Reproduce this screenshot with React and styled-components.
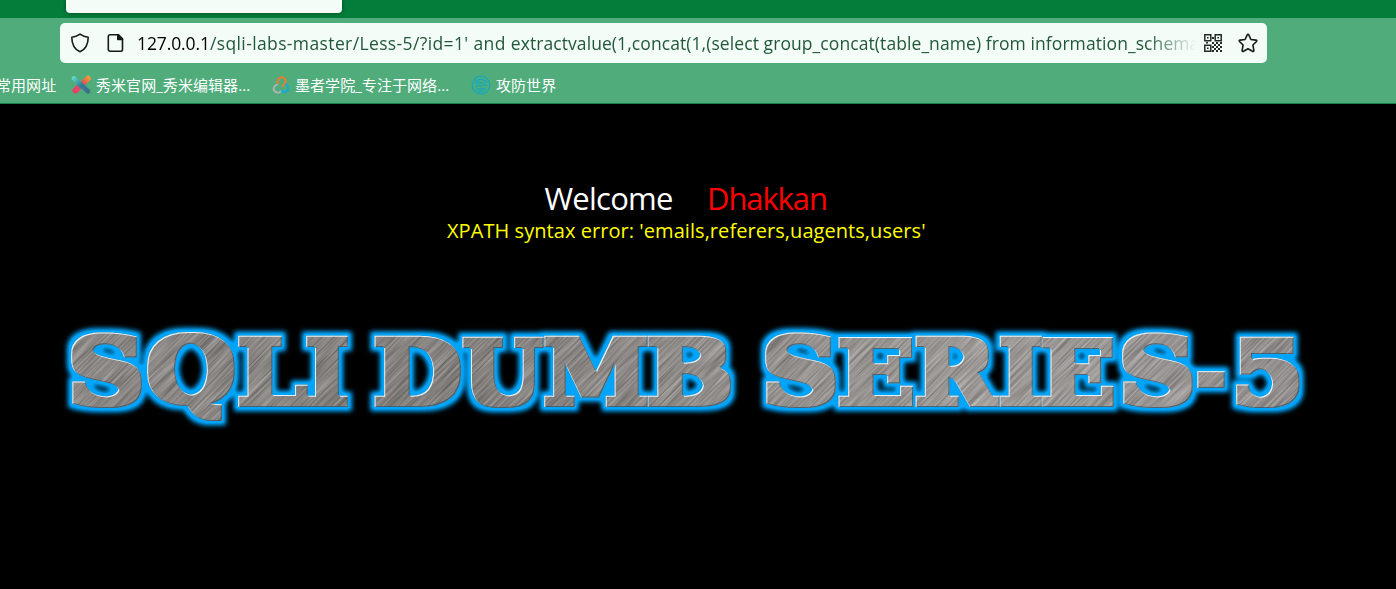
import React, { useMemo } from "react";
import styled, { createGlobalStyle } from "styled-components";

const Global = createGlobalStyle`
  * { box-sizing: border-box; }
  body { margin: 0; background: #000; overflow: hidden; }
`;

const Window = styled.div`
  height: 589px;
  display: flex;
  flex-direction: column;
  background: #000;
  overflow: hidden;
  font-family: "Open Sans", "Noto Sans CJK SC", sans-serif;
`;

const TabStrip = styled.div`
  height: 18px;
  padding-left: 66px;
  background: #047d3b;
`;

const ActiveTab = styled.div`
  width: 276px;
  height: 13px;
  background: #f3fcf7;
  border-radius: 0 0 4px 4px;
  box-shadow: 0 0 4px rgba(0, 0, 0, 0.5);
`;

const Toolbar = styled.div`
  height: 50px;
  padding: 5px 0 5px 60px;
  background: #50ad7b;
`;

const AddressBar = styled.div`
  width: 1207px;
  height: 40px;
  padding: 0 8px 0 10px;
  display: flex;
  align-items: center;
  background: #f3fcf7;
  border-radius: 5px;
`;

const Icon = styled.svg`
  flex: none;
  display: block;
  width: ${(p) => p.$size || 20}px;
  height: ${(p) => p.$size || 20}px;
  margin-right: ${(p) => p.$gap || 0}px;
`;

const Url = styled.div`
  width: 1059px;
  margin-right: 8px;
  overflow: hidden;
  white-space: pre;
  font-size: 17.5px;
  line-height: 34px;
  color: #22573a;
  mask-image: linear-gradient(to right, #000 calc(100% - 50px), transparent);
`;

const UrlPart = styled.span`
  letter-spacing: ${(p) => p.$track}px;
  color: ${(p) => (p.$host ? "#000" : "inherit")};
`;

const Bookmarks = styled.nav`
  height: 36px;
  display: flex;
  align-items: flex-start;
  padding-top: 5px;
  background: #50ad7b;
  border-bottom: 1px solid #1a8048;
`;

const Bookmark = styled.div`
  flex: none;
  display: flex;
  align-items: center;
  height: 24px;
  width: ${(p) => p.$width}px;
  margin-left: ${(p) => p.$offset || 0}px;
  font-size: 15px;
  line-height: 24px;
  letter-spacing: 0.06px;
  color: #fff;
  white-space: nowrap;
`;

const Page = styled.main`
  flex: 1;
  display: flex;
  flex-direction: column;
`;

const Greeting = styled.h1`
  display: flex;
  margin: 72px 0 0 544.5px;
  height: 44px;
  font-size: 31px;
  line-height: 44px;
  font-weight: 400;
  color: #fff;
`;

const GreetingWord = styled.span`
  width: 162.5px;
  letter-spacing: -0.75px;
`;

const Name = styled.span`
  letter-spacing: -1.1px;
  color: #f00;
`;

const ErrorLine = styled.p`
  margin: 0 0 0 447px;
  height: 24px;
  font-size: 20px;
  line-height: 22px;
  letter-spacing: 0.06px;
  white-space: nowrap;
  color: #ff0;
`;

const Banner = styled.svg`
  display: block;
  width: 1396px;
  height: 140px;
  margin-top: 66px;
`;

/* Each letter with the box its ink fills: left, right, top, bottom. */
const LETTERS = [
  ["S", 71, 142, 23, 98],
  ["Q", 147, 235, 22, 111],
  ["L", 238, 308, 26, 97],
  ["I", 306, 348, 26, 97],
  ["D", 374.5, 461.5, 26, 97],
  ["U", 462, 544, 26, 98],
  ["M", 544, 648, 26, 97],
  ["B", 647.5, 731.5, 26, 97],
  ["S", 765, 836, 23, 98],
  ["E", 838.5, 913.5, 26, 97],
  ["R", 915.5, 1000, 26, 97],
  ["I", 999.5, 1042, 26, 97],
  ["E", 1041, 1114, 26, 97],
  ["S", 1122, 1193, 23, 98],
  ["-", 1197, 1225, 61, 78],
  ["5", 1236, 1300, 26, 98],
];

const THICKEN = 3;

function fitLetters() {
  const ctx = document.createElement("canvas").getContext("2d");
  ctx.font = 'bold 200px "DejaVu Serif"';
  return LETTERS.map(([char, left, right, top, bottom]) => {
    const m = ctx.measureText(char);
    const sx = (right - left - 2 * THICKEN) / (m.actualBoundingBoxRight + m.actualBoundingBoxLeft);
    const sy = (bottom - top - 2 * THICKEN) / (m.actualBoundingBoxAscent + m.actualBoundingBoxDescent);
    const tx = left + THICKEN + m.actualBoundingBoxLeft * sx;
    const ty = top + THICKEN + m.actualBoundingBoxAscent * sy;
    return { char, transform: `matrix(${sx} 0 0 ${sy} ${tx} ${ty})` };
  });
}

const area = { filterUnits: "userSpaceOnUse", x: 0, y: 0, width: 1396, height: 140, colorInterpolationFilters: "sRGB" };

function Title() {
  const letters = useMemo(fitLetters, []);
  return (
    <Banner viewBox="0 0 1396 140">
      <defs>
        <linearGradient id="sheen" gradientUnits="userSpaceOnUse" x1="70" y1="0" x2="1300" y2="0">
          <stop offset="0" stopColor="#8c8886" />
          <stop offset="0.3" stopColor="#7f7b79" />
          <stop offset="0.5" stopColor="#918d8b" />
          <stop offset="0.75" stopColor="#a39f9d" />
          <stop offset="1" stopColor="#959190" />
        </linearGradient>
        <filter id="glow" {...area}>
          <feMorphology in="SourceAlpha" operator="dilate" radius="7" result="wide" />
          <feGaussianBlur in="wide" stdDeviation="2.4" result="soft" />
          <feComponentTransfer in="soft" result="halo">
            <feFuncA type="linear" slope="1.2" />
          </feComponentTransfer>
          <feFlood floodColor="#00a5fb" />
          <feComposite in2="halo" operator="in" />
        </filter>
        <filter id="body" {...area}>
          <feMorphology operator="dilate" radius="3" />
        </filter>
        <filter id="bevel" {...area}>
          <feMorphology in="SourceAlpha" operator="dilate" radius="3" result="body" />
          <feOffset in="body" dx="1" dy="1" result="down" />
          <feComposite in="body" in2="down" operator="out" result="litEdge" />
          <feFlood floodColor="#e8f4f8" />
          <feComposite in2="litEdge" operator="in" result="light" />
          <feOffset in="body" dx="-1" dy="-1" result="up" />
          <feComposite in="body" in2="up" operator="out" result="darkEdge" />
          <feFlood floodColor="#3f5663" floodOpacity="0.8" />
          <feComposite in2="darkEdge" operator="in" result="dark" />
          <feMerge>
            <feMergeNode in="dark" />
            <feMergeNode in="light" />
          </feMerge>
        </filter>
        <filter id="brush" filterUnits="userSpaceOnUse" x="-110" y="-10" width="1120" height="1110" colorInterpolationFilters="sRGB">
          <feTurbulence type="fractalNoise" baseFrequency="0.02 0.6" numOctaves="2" seed="4" />
          <feColorMatrix values="1.4 0 0 0 -0.15  1.4 0 0 0 -0.16  1.4 0 0 0 -0.17  0 0 0 0 0.28" />
        </filter>
        <g id="glyphs" fontFamily="DejaVu Serif" fontWeight="700" fontSize="200">
          {letters.map((l, i) => (
            <text key={i} transform={l.transform}>{l.char}</text>
          ))}
        </g>
        <mask id="letters" maskUnits="userSpaceOnUse" x="0" y="0" width="1396" height="140">
          <g fill="#fff" filter="url(#body)">
            <use href="#glyphs" />
          </g>
        </mask>
      </defs>
      <g filter="url(#glow)"><use href="#glyphs" /></g>
      <g mask="url(#letters)">
        <rect width="1396" height="140" fill="url(#sheen)" />
        <g transform="rotate(-45)">
          <rect x="-110" y="-10" width="1120" height="1110" filter="url(#brush)" />
        </g>
      </g>
      <g filter="url(#bevel)"><use href="#glyphs" /></g>
    </Banner>
  );
}

const ShieldIcon = () => (
  <Icon viewBox="0 0 20 20" $gap={16} fill="none" stroke="#161b18" strokeWidth="1.6" strokeLinejoin="round">
    <path d="M10 1.100c2.200 1.600 4.900 2.700 8.200 3.100 0 7-2.400 12-8.200 14.600C4.200 16.200 1.800 11.200 1.800 4.200 5.100 3.800 7.800 2.700 10 1.100Z" />
  </Icon>
);

const PageIcon = () => (
  <Icon viewBox="0 0 20 20" $gap={11} fill="none" stroke="#161b18" strokeWidth="1.6" strokeLinejoin="round">
    <path d="M4 1.800h8.500l4 4v10.700a1.700 1.700 0 0 1-1.700 1.700H4a1.700 1.700 0 0 1-1.700-1.700v-13A1.700 1.700 0 0 1 4 1.800Z" />
    <path d="M11.800 1.800v4.700h4.700Z" fill="#161b18" />
  </Icon>
);

const QrIcon = () => (
  <Icon viewBox="0 0 18 18" $size={18} $gap={16}>
    <g fill="none" stroke="#222a26" strokeWidth="1.500">
      <path d="M.8.8h6v6h-6zM11.200.8h6v6h-6zM.8 11.200h6v6h-6z" />
    </g>
    <path fill="#222a26" d="M3 3h1.600v1.600H3zM13.400 3H15v1.600h-1.600zM3 13.400h1.600V15H3zM8 3h2v2H8zM8 8h2v2H8zM2 8h2v1.500H2zM12 8h2v2h-2zM16 8h2v2h-2zM10 10h2v2h-2zM14 10h2v2h-2zM8 12h2v2H8zM12 12h2v2h-2zM16 12h2v2h-2zM10 14h2v2h-2zM14 14h2v2h-2zM8 16h2v2H8zM12 16h2v2h-2zM16 16h2v2h-2z" />
  </Icon>
);

const StarIcon = () => (
  <Icon viewBox="0 0 20 20" fill="none" stroke="#161b18" strokeWidth="1.6" strokeLinejoin="round">
    <path d="M10 1.200Q10.500 1.200 10.800 1.900L12.900 6.500 17.900 7.100Q19.300 7.400 18.500 8.500L14.900 12 15.800 17.200Q15.900 18.900 14.500 18.300L10 15.800 5.500 18.300Q4.100 18.900 4.200 17.200L5.100 12 1.500 8.500Q.7 7.400 2.100 7.100L7.100 6.500 9.200 1.900Q9.500 1.200 10 1.200Z" />
  </Icon>
);

const XiumiIcon = () => (
  <Icon viewBox="0 0 20 20" $gap={5} fill="none" strokeLinecap="round">
    <defs>
      <linearGradient id="xa" gradientUnits="userSpaceOnUse" x1="2" y1="2" x2="18" y2="18">
        <stop offset="0" stopColor="#62dcc8" />
        <stop offset="0.5" stopColor="#2f7f9c" />
        <stop offset="1" stopColor="#3e6a86" />
      </linearGradient>
      <linearGradient id="xb" gradientUnits="userSpaceOnUse" x1="18" y1="2" x2="2" y2="18">
        <stop offset="0" stopColor="#f59a3c" />
        <stop offset="0.35" stopColor="#e2574a" />
        <stop offset="0.55" stopColor="#4f7f92" />
        <stop offset="0.7" stopColor="#e9476b" />
        <stop offset="1" stopColor="#f0355c" />
      </linearGradient>
    </defs>
    <path d="M17 3.500 L10 10" stroke="url(#xb)" strokeWidth="5.500" />
    <path d="M10 10 L4.500 15.500" stroke="url(#xb)" strokeWidth="6" />
    <path d="M3 3.500 L17 16.200" stroke="url(#xa)" strokeWidth="4.600" />
  </Icon>
);

const MozheIcon = () => (
  <Icon viewBox="0 0 20 20" $gap={4} fill="none" strokeWidth="2" strokeLinecap="round">
    <path d="M7 8.200a4 4 0 1 1 7.500-1.500q-.3 2.500-2.500 4.300" stroke="#f5792c" />
    <path d="M15 9.500a4 4 0 1 1-4.500 6.500" stroke="#14a9d6" />
    <path d="M9.500 16.500a4 4 0 1 1-3.500-6.800" stroke="#a9b5ae" />
  </Icon>
);

const GlobeIcon = () => (
  <Icon viewBox="0 0 20 20" $gap={5} fill="none" stroke="#16a9bd" strokeWidth="1.300">
    <circle cx="10" cy="10" r="8.800" />
    <path d="M4 7.500q2.500-3.500 6-3.200 4 .2 6 3.500M4.500 9q5-2.500 7.500-.5t4 1M5 12q2-2.500 4-1.500t6-.5M5 14.500q5-2 10 0M7.500 16.500q2.500-1.500 5 0M7 6.500l3 1.500" />
  </Icon>
);

export default function App() {
  return (
    <Window>
      <Global />
      <TabStrip>
        <ActiveTab />
      </TabStrip>
      <Toolbar>
        <AddressBar>
          <ShieldIcon />
          <PageIcon />
          <Url>
            <UrlPart $host $track={-0.1}>127.0.0.1</UrlPart>
            <UrlPart $track={0.38}>/sqli-labs-master/Less-5/?id=1' and </UrlPart>
            <UrlPart $track={0.08}>extractvalue(1,concat(1,(select group_concat(table_name) from information_schema</UrlPart>
          </Url>
          <QrIcon />
          <StarIcon />
        </AddressBar>
      </Toolbar>
      <Bookmarks>
        <Bookmark $width={75} $offset={-4}>常用网址</Bookmark>
        <Bookmark $width={200}><XiumiIcon />秀米官网_秀米编辑器...</Bookmark>
        <Bookmark $width={200}><MozheIcon />墨者学院_专注于网络...</Bookmark>
        <Bookmark $width={100}><GlobeIcon />攻防世界</Bookmark>
      </Bookmarks>
      <Page>
        <Greeting>
          <GreetingWord>Welcome</GreetingWord>
          <Name>Dhakkan</Name>
        </Greeting>
        <ErrorLine>XPATH syntax error: 'emails,referers,uagents,users'</ErrorLine>
        <Title />
      </Page>
    </Window>
  );
}
